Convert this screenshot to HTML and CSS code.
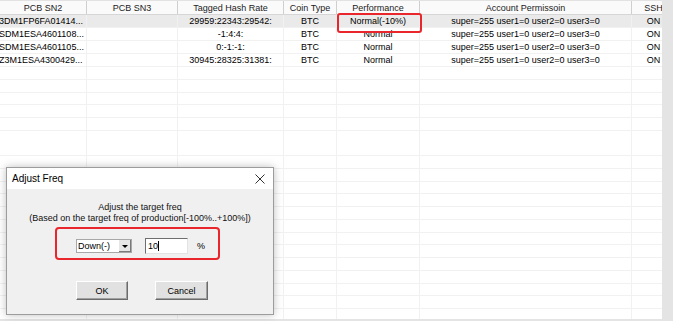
FILE: index.html
```html
<!DOCTYPE html>
<html lang="en">
<head>
  <meta charset="UTF-8">
  <title>Miner list | Adjust Freq</title>
  <link rel="stylesheet" href="styles.css">
</head>
<body>
  <div class="screen">
    <div class="list">
      <div class="row head">
        <div>PCB SN2</div><div>PCB SN3</div><div>Tagged Hash Rate</div><div>Coin Type</div>
        <div>Performance</div><div>Account Permissoin</div><div>SSH</div>
      </div>
      <div class="row sel">
        <div>3DM1FP6FA01414...</div><div></div><div>29959:22343:29542:</div><div>BTC</div>
        <div>Normal(-10%)</div><div>super=255 user1=0 user2=0 user3=0</div><div>ON</div>
      </div>
      <div class="row">
        <div>SDM1ESA4601108...</div><div></div><div>-1:4:4:</div><div>BTC</div>
        <div>Normal</div><div>super=255 user1=0 user2=0 user3=0</div><div>ON</div>
      </div>
      <div class="row">
        <div>SDM1ESA4601105...</div><div></div><div>0:-1:-1:</div><div>BTC</div>
        <div>Normal</div><div>super=255 user1=0 user2=0 user3=0</div><div>ON</div>
      </div>
      <div class="row">
        <div>Z3M1ESA4300429...</div><div></div><div>30945:28325:31381:</div><div>BTC</div>
        <div>Normal</div><div>super=255 user1=0 user2=0 user3=0</div><div>ON</div>
      </div>
      <div class="filler">
        <div></div><div></div><div></div><div></div><div></div><div></div><div></div>
      </div>
    </div>

    <div class="mark perf-mark"></div>

    <div class="dlg">
      <div class="dlg-title">
        <span>Adjust Freq</span>
        <svg class="close" width="10" height="10" viewBox="0 0 10 10">
          <path d="M0.5 0.5L9.5 9.5M9.5 0.5L0.5 9.5" stroke="#333" stroke-width="1"/>
        </svg>
      </div>
      <div class="dlg-body">
        <p class="hint">Adjust the target freq<br>(Based on the target freq of production[-100%..+100%])</p>
        <div class="ctrls">
          <div class="combo">
            <span class="combo-val">Down(-)</span>
            <span class="combo-btn"><i></i></span>
          </div>
          <div class="edit">10<span class="caret"></span></div>
          <span class="pct">%</span>
        </div>
        <div class="btns">
          <button class="btn">OK</button>
          <button class="btn">Cancel</button>
        </div>
      </div>
    </div>
  </div>
</body>
</html>
```

FILE: styles.css
```css
*{box-sizing:border-box;margin:0;padding:0}
body{
  width:673px;height:321px;overflow:hidden;background:#fff;
  font-family:"Liberation Sans",Arial,sans-serif;font-size:9px;color:#000
}
.screen{position:relative;width:673px;height:321px;background:#e4e4e4;padding:0 11px 2px 0}

/* list view */
.list{height:319px;background:#fff;display:flex;flex-direction:column;overflow:hidden}
.row,.filler{
  display:grid;grid-template-columns:87px 91px 106px 53px 83px 212px 44px;
  flex:none
}
.row{height:13px;line-height:12px;border-bottom:1px solid #f1f1f1}
.row>div{border-right:1px solid #f1f1f1;text-align:center;white-space:nowrap;overflow:hidden}
.row>div:first-child{text-align:left;text-indent:-1px}
.head{height:15px;line-height:14px;background:#fafafa;border-top:1px solid #e2e2e2;border-bottom:1px solid #d6d6d6;color:#222}
.head>div{border-right:1px solid #cfcfcf}
.head>div:first-child{text-align:center;text-indent:0}
.sel{background:#eaeaea}
.filler{
  flex:1;
  background:repeating-linear-gradient(to bottom,#fff 0,#fff 11.75px,#f1f1f1 11.75px,#f1f1f1 12.75px)
}
.filler>div{border-right:1px solid #f1f1f1}

/* red annotations */
.mark{position:absolute;border:2px solid #e8262b;border-radius:3px}
.perf-mark{left:337px;top:13px;width:85px;height:20px}

/* dialog */
.dlg{
  position:absolute;left:6px;top:167px;width:268px;height:148px;
  background:#f0f0f0;border:1px solid #9c9c9c;box-shadow:0 0 8px rgba(0,0,0,.25);
  display:flex;flex-direction:column
}
.dlg-title{
  height:21px;background:#fff;display:flex;align-items:center;justify-content:space-between;
  padding:0 8px 0 5px;font-size:10px;color:#000
}
.dlg-body{flex:1;display:flex;flex-direction:column;align-items:center;padding-top:13px}
.hint{text-align:center;line-height:11px;color:#111}
.ctrls{
  align-self:flex-start;margin:3px 0 0 48px;width:165px;height:33px;
  border:2px solid #e8262b;border-radius:4px;
  display:flex;align-items:center;padding:5px 0 0 19px
}
.combo{
  width:56px;height:14px;display:flex;background:#fff;border:1px solid #a8a8a8
}
.combo-val{flex:1;line-height:12px;padding-left:1px}
.combo-btn{
  width:13px;background:#e6e6e6;border-left:1px solid #fff;
  box-shadow:inset -1px -1px 0 #7a7a7a;display:flex;align-items:center;justify-content:center
}
.combo-btn i{border-left:3px solid transparent;border-right:3px solid transparent;border-top:3px solid #000}
.edit{
  margin-left:13px;width:43px;height:16px;background:#fff;line-height:14px;padding-left:2px;
  border:1px solid;border-color:#6e6e6e #e3e3e3 #e3e3e3 #6e6e6e;display:flex;align-items:center
}
.caret{width:1px;height:10px;background:#000}
.pct{margin-left:9px}
.btns{display:flex;gap:27px;margin-top:21px;margin-left:4px}
.btn{
  height:19px;width:52px;font:inherit;color:#000;background:#e1e1e1;
  border:1px solid;border-color:#fff #6b6b6b #6b6b6b #fff;box-shadow:inset -1px -1px 0 #a0a0a0
}
.btn+.btn{width:53px}
```
